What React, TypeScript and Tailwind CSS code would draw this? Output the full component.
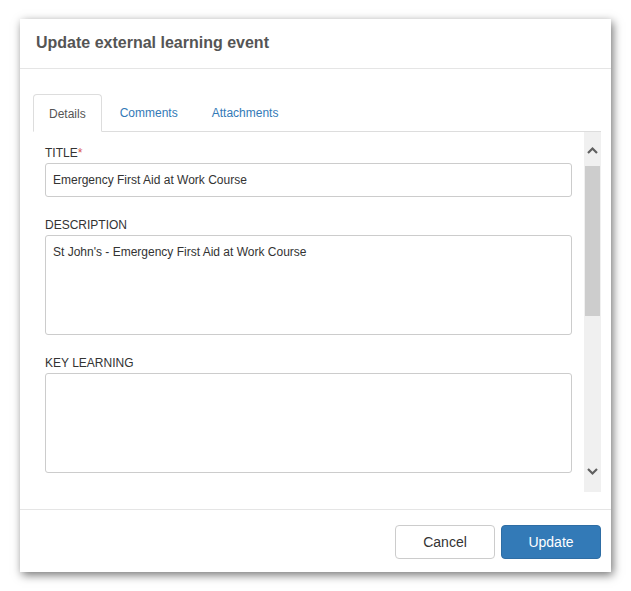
import React from "react";

const font = { fontFamily: '"Liberation Sans", Arial, sans-serif' };

function Field({
  label,
  required,
  children,
}: {
  label: string;
  required?: boolean;
  children: React.ReactNode;
}) {
  return (
    <div className="flex flex-col">
      <label className="text-[12px] leading-[14px] text-[#333] uppercase mb-[3px]">
        {label}
        {required && <span className="text-[#d9534f]">*</span>}
      </label>
      {children}
    </div>
  );
}

function Chevron({ up }: { up?: boolean }) {
  return (
    <svg width="11" height="8" viewBox="0 0 11 8" className="block">
      <path
        d={up ? "M1 7 L5.5 2.5 L10 7" : "M1 1 L5.5 5.5 L10 1"}
        fill="none"
        stroke="#606060"
        strokeWidth="2.2"
      />
    </svg>
  );
}

export default function App() {
  return (
    <div className="bg-white min-h-[591px] pt-[19px] pl-[20px]" style={font}>
      <div className="w-[591px] h-[553px] bg-white flex flex-col shadow-[2px_3px_9px_rgba(0,0,0,0.55)]">
        {/* Header */}
        <div className="h-[50px] border-b border-[#e5e5e5] flex items-center px-[16px] pb-[2px] shrink-0">
          <h2 className="text-[16px] font-bold text-[#555] leading-none">
            Update external learning event
          </h2>
        </div>

        {/* Body */}
        <div className="flex-1 pt-[25px] px-[13px] pr-[10px] flex flex-col">
          <div className="flex border-b border-[#ddd] h-[38px] shrink-0">
            <div className="px-[15px] h-[38px] pt-[1px] leading-[36px] text-[12px] text-[#555] bg-white border border-[#ddd] border-b-white rounded-t-[4px]">
              Details
            </div>
            <div className="ml-[2px] px-[16px] pt-[1px] leading-[37px] text-[12px] text-[#337ab7]">
              Comments
            </div>
            <div className="ml-[2px] px-[16px] pt-[1px] leading-[37px] text-[12px] text-[#337ab7]">
              Attachments
            </div>
          </div>

          <div className="flex h-[360px]">
            <div className="flex-1 overflow-hidden pt-[14px] px-[12px] flex flex-col gap-[21px]">
              <Field label="Title" required>
                <div className="h-[34px] border border-[#ccc] rounded-[3px] px-[7px] flex items-center text-[12px] text-[#333]">
                  Emergency First Aid at Work Course
                </div>
              </Field>
              <Field label="Description">
                <div className="h-[100px] border border-[#ccc] rounded-[3px] px-[7px] pt-[8px] text-[12px] leading-[16px] text-[#333]">
                  St John's - Emergency First Aid at Work Course
                </div>
              </Field>
              <Field label="Key Learning">
                <div className="h-[100px] border border-[#ccc] rounded-[3px] shrink-0" />
              </Field>
            </div>
            {/* Scrollbar */}
            <div className="w-[17px] bg-[#f0f0f0] flex flex-col items-center shrink-0">
              <div className="h-[34px] flex items-center justify-center pt-[2px]">
                <Chevron up />
              </div>
              <div className="w-[15px] h-[150px] bg-[#cdcdcd]" />
              <div className="flex-1" />
              <div className="h-[34px] flex items-center justify-center pb-[6px]">
                <Chevron />
              </div>
            </div>
          </div>
        </div>

        {/* Footer */}
        <div className="h-[63px] border-t border-[#e5e5e5] flex items-start justify-end gap-[6px] pt-[15px] pr-[10px] shrink-0">
          <button className="w-[100px] h-[34px] border border-[#ccc] rounded-[4px] bg-white text-[14px] text-[#333]">
            Cancel
          </button>
          <button className="w-[100px] h-[34px] border border-[#2e6da4] rounded-[4px] bg-[#337ab7] text-[14px] text-white">
            Update
          </button>
        </div>
      </div>
    </div>
  );
}
